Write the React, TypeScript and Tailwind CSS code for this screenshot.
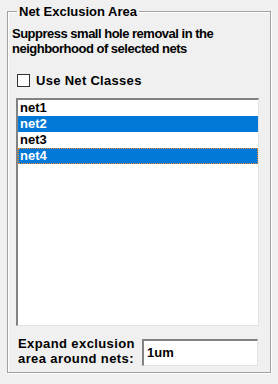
import React from 'react';

const nets = [
  { name: 'net1', selected: false, focused: false },
  { name: 'net2', selected: true, focused: false },
  { name: 'net3', selected: false, focused: false },
  { name: 'net4', selected: true, focused: true },
];

const font = { fontFamily: '"Liberation Sans", Arial, sans-serif' };

const App: React.FC = () => {
  return (
    <div
      className="w-[278px] h-[384px] bg-[#f0f0f0] text-black text-[13px] font-bold leading-[15px] pl-[7px] pt-[4px] overflow-hidden"
      style={font}
    >
      <fieldset className="w-[264px] h-[369px] border border-[#a0a0a0] shadow-[inset_1px_1px_0_#fff,1px_1px_0_#fff] px-0">
        <legend className="ml-[9px] px-[2px] leading-[15px]">Net Exclusion Area</legend>

        <p className="pl-[4px] mt-[7px] pr-2 tracking-[-0.5px]">
          Suppress small hole removal in the neighborhood of selected nets
        </p>

        <label className="flex items-center gap-[6px] pl-[9px] mt-[17px] tracking-[0.3px]">
          <span className="w-[13px] h-[13px] bg-white border border-[#333] shrink-0" />
          <span>Use Net Classes</span>
        </label>

        <div className="ml-[8px] mt-[10px] w-[243px] h-[228px] bg-white border-t-2 border-l-2 border-t-[#828282] border-l-[#828282] border-r border-b border-r-[#e3e3e3] border-b-[#e3e3e3]">
          {nets.map((n) => (
            <div
              key={n.name}
              className={
                'h-[16px] leading-[16px] pl-[2px] ' +
                (n.selected ? 'bg-[#0078d7] text-white ' : '') +
                (n.focused ? 'outline-1 outline-dotted outline-[#f08a24] -outline-offset-1' : '')
              }
            >
              {n.name}
            </div>
          ))}
        </div>

        <div className="flex items-start mt-[10px] pl-[10px]">
          <div className="w-[124px] leading-[15px] tracking-[0.4px]">
            Expand exclusion
            <br />
            area around nets:
          </div>
          <div className="mt-[3px] w-[116px] h-[27px] bg-white border-t-2 border-l-2 border-t-[#828282] border-l-[#828282] border-r border-b border-r-[#e3e3e3] border-b-[#e3e3e3] pl-[3px] pt-[4px]">
            1um
          </div>
        </div>
      </fieldset>
    </div>
  );
};

export default App;
